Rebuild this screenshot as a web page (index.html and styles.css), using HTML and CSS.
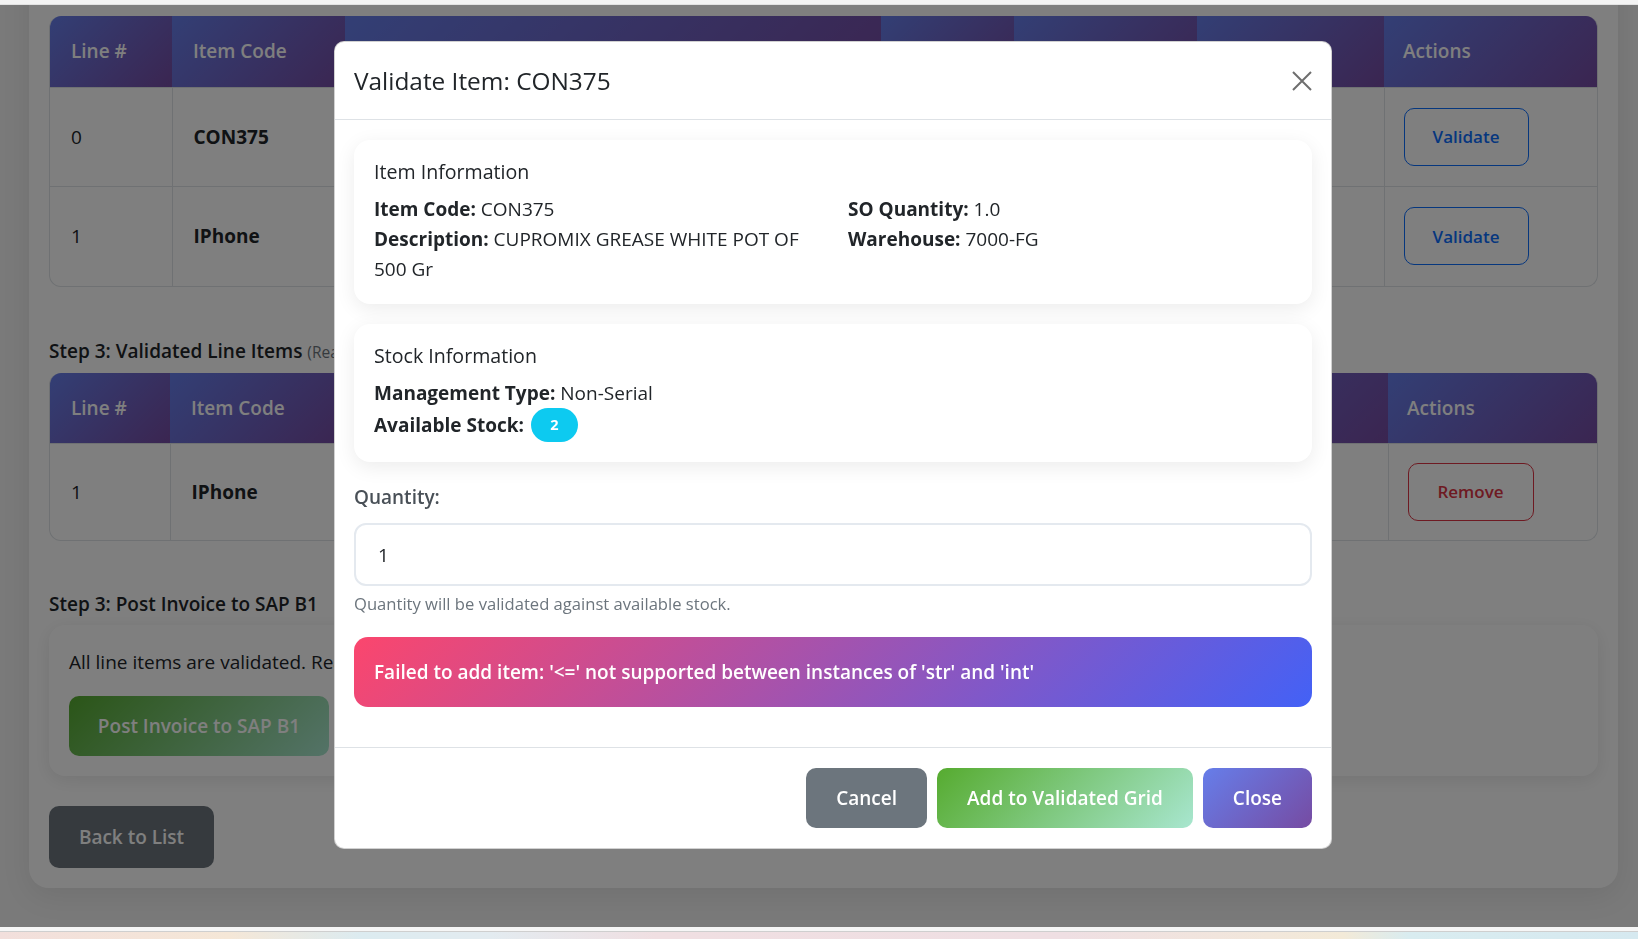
FILE: index.html
```html
<!DOCTYPE html>
<html lang="en">
<head>
<meta charset="utf-8">
<title>Validate Item</title>
<link rel="stylesheet" href="styles.css">
</head>
<body>
<div class="chrome-top"></div>

<div class="page">
  <div class="main-card">
    <h5 class="step-title first">Step 2: Sales Order Line Items</h5>
    <div class="table-wrap t1">
      <table class="grid">
        <colgroup>
          <col style="width:122px"><col style="width:173px"><col style="width:536px"><col style="width:133px"><col style="width:183px"><col style="width:187px"><col style="width:214px">
        </colgroup>
        <thead>
          <tr><th>Line #</th><th>Item Code</th><th></th><th></th><th></th><th></th><th>Actions</th></tr>
        </thead>
        <tbody>
          <tr class="r1"><td>0</td><td><strong>CON375</strong></td><td></td><td></td><td></td><td></td><td><button class="btn-ol primary">Validate</button></td></tr>
          <tr class="r2"><td>1</td><td><strong>IPhone</strong></td><td></td><td></td><td></td><td></td><td><button class="btn-ol primary">Validate</button></td></tr>
        </tbody>
      </table>
    </div>

    <h5 class="step-title">Step 3: Validated Line Items <small>(Ready for invoice)</small></h5>
    <div class="table-wrap t2">
      <table class="grid">
        <colgroup>
          <col style="width:120px"><col style="width:171px"><col style="width:540px"><col style="width:220px"><col style="width:287px"><col style="width:210px">
        </colgroup>
        <thead>
          <tr><th>Line #</th><th>Item Code</th><th></th><th></th><th></th><th>Actions</th></tr>
        </thead>
        <tbody>
          <tr class="r3"><td>1</td><td><strong>IPhone</strong></td><td></td><td></td><td></td><td><button class="btn-ol danger">Remove</button></td></tr>
        </tbody>
      </table>
    </div>

    <h5 class="step-title">Step 3: Post Invoice to SAP B1</h5>
    <div class="post-card">
      <p>All line items are validated. Ready to post the invoice to SAP Business One.</p>
      <button class="btn-post">Post Invoice to SAP B1</button>
    </div>
    <button class="btn-back">Back to List</button>
  </div>
</div>

<div class="backdrop"></div>

<div class="modal">
  <div class="modal-dialog">
    <div class="modal-header">
      <h5 class="modal-title">Validate Item: CON375</h5>
      <button class="btn-close" aria-label="Close">
        <svg width="20" height="20" viewBox="0 0 20 20"><path d="M1 1 L19 19 M19 1 L1 19" stroke="#6e6e6e" stroke-width="2" fill="none"/></svg>
      </button>
    </div>
    <div class="modal-body">
      <div class="info-card">
        <h6>Item Information</h6>
        <div class="info-grid">
          <div>
            <p><strong>Item Code:</strong> CON375</p>
            <p><strong>Description:</strong> CUPROMIX GREASE WHITE POT OF 500 Gr</p>
          </div>
          <div>
            <p><strong>SO Quantity:</strong> 1.0</p>
            <p><strong>Warehouse:</strong> 7000-FG</p>
          </div>
        </div>
      </div>

      <div class="info-card">
        <h6>Stock Information</h6>
        <p><strong>Management Type:</strong> Non-Serial</p>
        <p class="stock-row"><strong>Available Stock:</strong> <span class="badge">2</span></p>
      </div>

      <label class="form-label">Quantity:</label>
      <div class="input">1</div>
      <div class="form-text">Quantity will be validated against available stock.</div>

      <div class="alert">Failed to add item: '&lt;=' not supported between instances of 'str' and 'int'</div>
    </div>
    <div class="modal-footer">
      <button class="btn btn-cancel">Cancel</button>
      <button class="btn btn-add">Add to Validated Grid</button>
      <button class="btn btn-close-g">Close</button>
    </div>
  </div>
</div>

<div class="chrome-bottom"></div>
</body>
</html>
```

FILE: styles.css
```css
* { box-sizing: border-box; }
html, body { margin: 0; height: 100%; }
body {
  font-family: "Open Sans", "Noto Sans", sans-serif;
  font-size: 19px;
  line-height: 30px;
  color: #212529;
  background: #f4f4f4;
  overflow: hidden;
}
button { font-family: inherit; cursor: pointer; }

/* browser chrome strips */
.chrome-top {
  position: fixed; top: 0; left: 0; right: 0; height: 5px;
  background: #f3f3f3; border-bottom: 1px solid #e2e2e2; z-index: 30;
}
.chrome-bottom {
  position: fixed; top: 927px; left: 0; right: 0; height: 12px; z-index: 30;
  border-top: 4px solid #f6f6f6;
  background: linear-gradient(90deg, #f2dfdc 0%, #f5e7d7 14%, #dcebf0 22%, #e3ebf0 30%, #f0dfe2 40%, #efdfe3 65%, #f3ead8 82%, #d9ecf0 86%, #d6e9f0 100%);
  box-shadow: inset 0 1px 0 #cfcfcf;
}

/* background page */
.page { padding: 0 20px 0 29px; }
.main-card {
  margin-top: -42px;
  background: #fff;
  border-radius: 20px;
  padding: 20px;
  box-shadow: 0 8px 30px rgba(0,0,0,.08);
}
.step-title {
  margin: 0 0 6px;
  font-size: 19px;
  font-weight: 600;
  line-height: 30px;
}
.step-title.first { margin-bottom: 8px; }
.step-title small { font-size: 15.5px; font-weight: 400; color: #6c757d; }

.table-wrap {
  border-radius: 12px;
  overflow: hidden;
  border: 1px solid #dee2e6;
  border-top: 0;
}
.table-wrap.t1 { margin-bottom: 49px; }
.table-wrap.t2 { margin-bottom: 48px; }
.grid {
  width: 100%;
  border-collapse: collapse;
  table-layout: fixed;
}
.grid th {
  height: 71px;
  padding: 0 21px;
  text-align: left;
  font-weight: 600;
  color: #fff;
  background: linear-gradient(135deg, #667eea 0%, #764ba2 100%);
  white-space: nowrap;
}
.t2 .grid th { height: 70px; }
.grid td {
  padding: 0 21px;
  border: 1px solid #dee2e6;
  vertical-align: middle;
  white-space: nowrap;
  overflow: hidden;
}
.grid th:last-child, .grid td:last-child { padding-left: 19px; }
.grid tr td:first-child { border-left: 0; }
.grid tr td:last-child { border-right: 0; }
.grid tbody tr:last-child td { border-bottom: 0; }
.r1 td { height: 99px; }
.r2 td { height: 100px; }
.r3 td { height: 97px; }
.grid td strong { font-weight: 700; }

.btn-ol {
  display: inline-flex; align-items: center; justify-content: center;
  height: 58px; width: 125px;
  background: transparent;
  border: 1.5px solid currentColor;
  border-radius: 10px;
  font-size: 17px; font-weight: 600;
}
.btn-ol.primary { color: #0d6efd; }
.btn-ol.danger { color: #dc3545; width: 126px; }

.post-card {
  background: #fff;
  border-radius: 16px;
  padding: 22px 20px 20px;
  box-shadow: 0 4px 18px rgba(0,0,0,.09);
  margin-bottom: 30px;
  white-space: nowrap;
}
.post-card p { margin: 0 0 19px; }
.btn-post {
  height: 60px; width: 260px;
  border: 0; border-radius: 10px;
  background: linear-gradient(135deg, #56ab2f 0%, #a8e6cf 100%);
  color: #fff; font-size: 19px; font-weight: 600;
}
.btn-back {
  height: 62px; width: 165px;
  border: 0; border-radius: 10px;
  background: #6c757d;
  color: #fff; font-size: 19px; font-weight: 600;
}

/* modal */
.backdrop {
  position: fixed; inset: 0;
  background: rgba(0,0,0,.5);
  z-index: 10;
}
.modal { position: fixed; inset: 0; z-index: 20; }
.modal-dialog {
  width: 998px;
  margin: 41px 0 0 334px;
  background: #fff;
  border: 1px solid rgba(0,0,0,.18);
  border-radius: 10px;
}
.modal-header {
  display: flex; align-items: center; justify-content: space-between;
  padding: 20px 19px;
  border-bottom: 1px solid #dee2e6;
}
.modal-title {
  margin: 0;
  font-size: 24.4px; font-weight: 500; line-height: 37px;
}
.btn-close {
  width: 20px; height: 20px; padding: 0;
  border: 0; background: transparent;
  display: flex;
}
.modal-body { padding: 20px 19px; }
.info-card {
  background: #fff;
  border-radius: 16px;
  padding: 20px;
  box-shadow: 0 5px 20px rgba(0,0,0,.08);
  margin-bottom: 20px;
}
.info-card h6 {
  margin: 0 0 10px;
  font-size: 19.6px; font-weight: 500; line-height: 24px;
}
.info-card p { margin: 0; }
.info-card strong { font-weight: 700; }
.info-grid {
  display: grid;
  grid-template-columns: 1fr 1fr;
  column-gap: 30px;
}
.stock-row { display: flex; align-items: center; height: 34px; gap: 7px; }
.badge {
  display: inline-flex; align-items: center; justify-content: center;
  width: 47px; height: 34px;
  border-radius: 17px;
  background: #0dcaf0;
  color: #fff;
  font-size: 14.5px; font-weight: 700;
}
.form-label {
  display: block;
  margin-bottom: 11px;
  font-weight: 600;
  color: #495057;
}
.input {
  height: 63px;
  border: 2px solid #e4e9ef;
  border-radius: 12px;
  padding: 0 22px;
  display: flex; align-items: center;
  color: #212529;
}
.form-text {
  margin-top: 5px;
  margin-bottom: 20px;
  font-size: 16.6px; line-height: 26px;
  color: #6c757d;
}
.alert {
  height: 70px;
  margin-bottom: 20px;
  padding: 0 20px;
  display: flex; align-items: center;
  border-radius: 14px;
  background: linear-gradient(135deg, #fb466d 0%, #4361f6 100%);
  color: #fff;
  font-size: 19px;
  font-weight: 600;
}
.modal-footer {
  display: flex; justify-content: flex-end; gap: 10px;
  padding: 20px 19px;
  border-top: 1px solid #dee2e6;
}
.btn {
  height: 60px;
  padding: 0 30px;
  border: 0; border-radius: 10px;
  color: #fff;
  font-size: 19px; font-weight: 600;
}
.btn-cancel { background: #6c757d; }
.btn-add { background: linear-gradient(135deg, #56ab2f 0%, #a8e6cf 100%); }
.btn-close-g { background: linear-gradient(135deg, #667eea 0%, #764ba2 100%); }
```
